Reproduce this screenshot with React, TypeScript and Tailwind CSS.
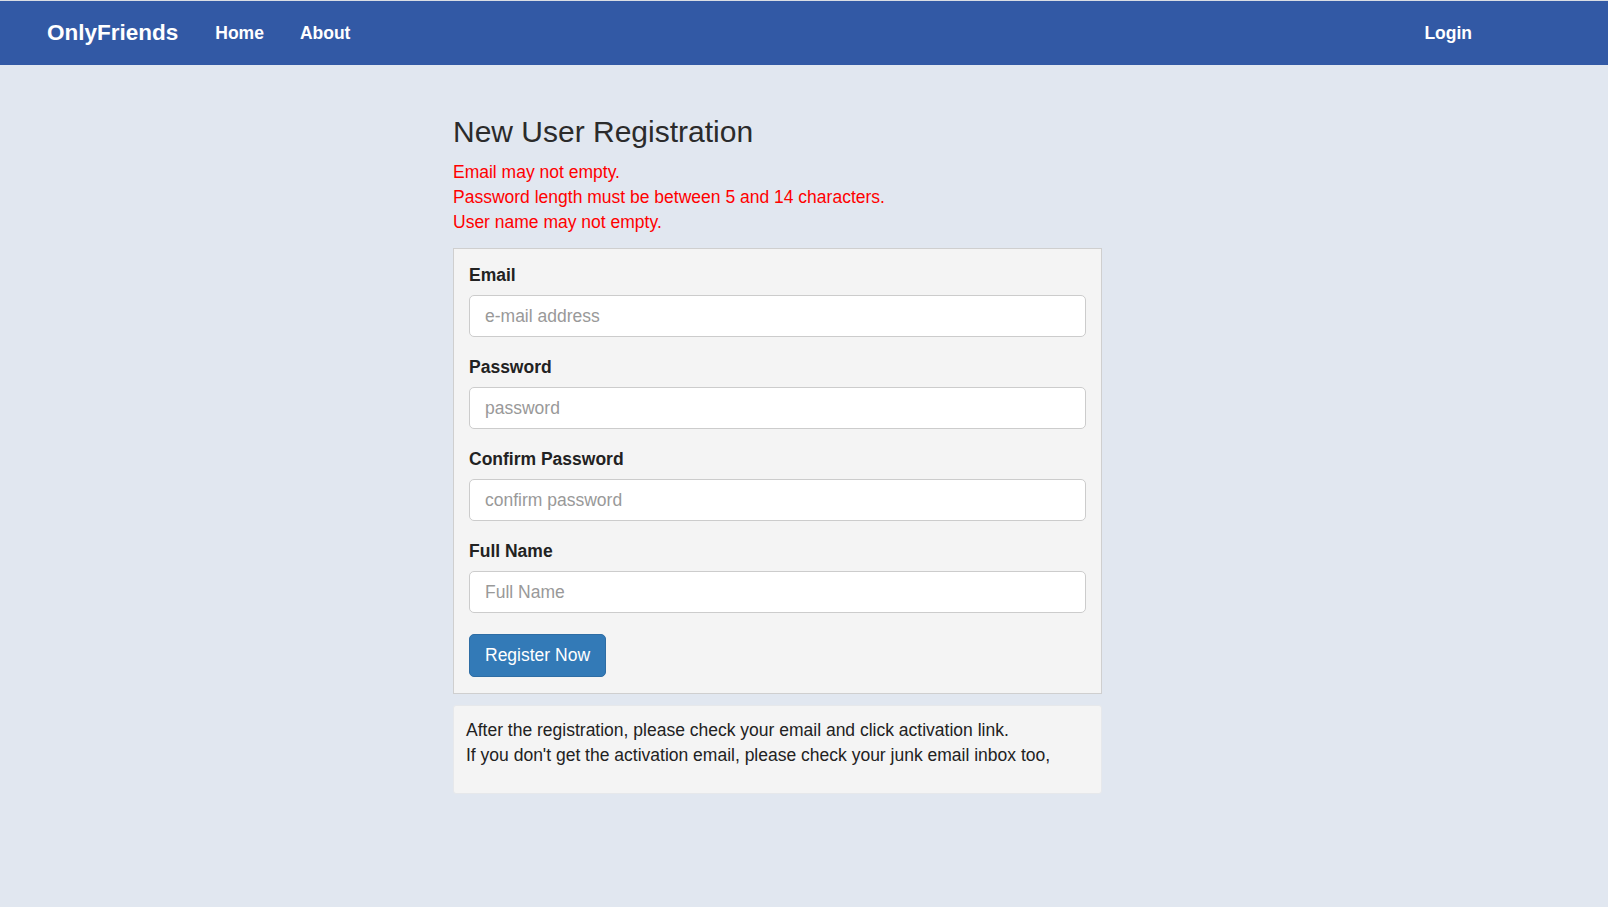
import { useState } from 'react';

const fields = [
  { name: 'email', label: 'Email', type: 'text', placeholder: 'e-mail address' },
  { name: 'password', label: 'Password', type: 'password', placeholder: 'password' },
  { name: 'confirm', label: 'Confirm Password', type: 'password', placeholder: 'confirm password' },
  { name: 'fullName', label: 'Full Name', type: 'text', placeholder: 'Full Name' },
];

const errors = [
  'Email may not empty.',
  'Password length must be between 5 and 14 characters.',
  'User name may not empty.',
];

export default function App() {
  const [values, setValues] = useState<Record<string, string>>({});

  return (
    <div
      className="min-h-screen bg-[#e1e7f0] text-[#333] text-[17.5px] leading-[25px]"
      style={{ fontFamily: '"Liberation Sans", Arial, sans-serif' }}
    >
      {/* Navbar */}
      <nav className="h-[65px] border-t border-[#d9dde4] bg-[#3259a5] flex items-center pl-[47px] text-white">
        <a href="#" className="text-[22.5px] font-bold leading-[30px]">
          OnlyFriends
        </a>
        <a href="#" className="ml-[37px] font-bold">
          Home
        </a>
        <a href="#" className="ml-[36px] font-bold">
          About
        </a>
        <a href="#" className="ml-auto mr-[136px] font-bold">
          Login
        </a>
      </nav>

      <div className="ml-[453px] w-[649px] pt-[50px] pb-10">
        <h3 className="text-[30px] leading-[33px] text-[#2b2b2b]">New User Registration</h3>

        <div className="mt-[12px] text-[#ff0000]">
          {errors.map((err) => (
            <div key={err}>{err}</div>
          ))}
        </div>

        {/* Form */}
        <form
          onSubmit={(e) => e.preventDefault()}
          className="mt-[13px] border border-[#cfcfcf] bg-[#f4f4f4] px-[15px] pt-[14px] pb-[16px]"
        >
          {fields.map((f) => (
            <div key={f.name} className="mb-[18px]">
              <label className="block font-bold text-[#222] mb-[7px]">{f.label}</label>
              <input
                type={f.type}
                placeholder={f.placeholder}
                value={values[f.name] || ''}
                onChange={(e) => setValues({ ...values, [f.name]: e.target.value })}
                className="block w-full h-[42px] rounded-[5px] border border-[#cccccc] bg-white px-[15px] text-[17.5px] text-[#555] placeholder:text-[#999] outline-none focus:border-[#66afe9]"
              />
            </div>
          ))}
          <button
            type="submit"
            className="mt-[3px] h-[43px] px-[15px] rounded-[5px] border border-[#2e6da4] bg-[#337ab7] text-white text-[17.5px] hover:bg-[#286090]"
          >
            Register Now
          </button>
        </form>

        {/* Info */}
        <div className="mt-[11px] rounded-[3px] border border-[#e6e8eb] bg-[#f4f4f4] pl-[12px] pr-3 pt-[12px] pb-[25px] text-[#222]">
          <div>After the registration, please check your email and click activation link.</div>
          <div>If you don't get the activation email, please check your junk email inbox too,</div>
        </div>
      </div>
    </div>
  );
}
